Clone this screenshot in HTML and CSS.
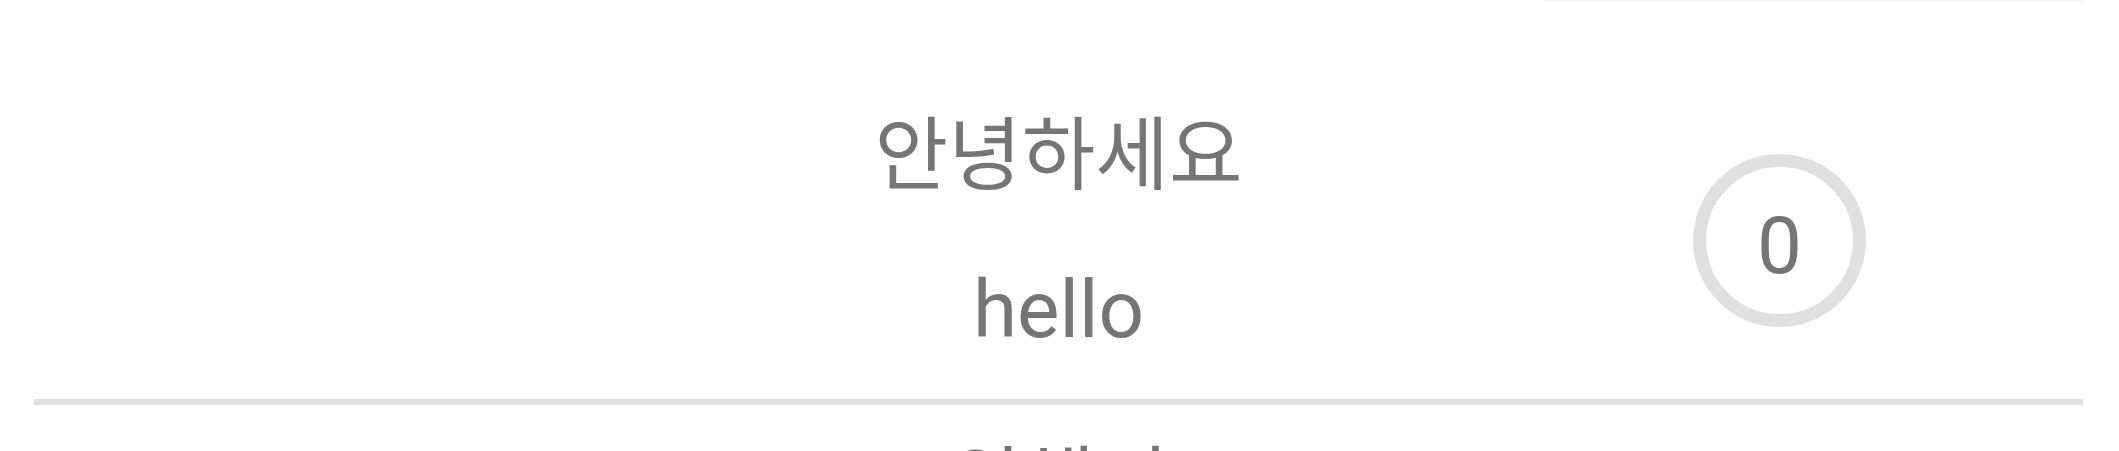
FILE: index.html
```html
<!DOCTYPE html>
<html lang="ko">
<head>
<meta charset="utf-8">
<title>List</title>
<link rel="stylesheet" href="styles.css">
</head>
<body>
<div class="top-area">
  <div class="prev-edge"></div>
</div>
<ul class="list">
  <li class="row">
    <div class="word-ko">안녕하세요</div>
    <div class="word-en">hello</div>
    <div class="count">0</div>
  </li>
  <li class="row">
    <div class="word-ko">위해서</div>
    <div class="word-en">for</div>
    <div class="count">0</div>
  </li>
</ul>
</body>
</html>
```

FILE: styles.css
```css
html, body {
  margin: 0;
  padding: 0;
  background: #ffffff;
  overflow: hidden;
}

body {
  font-family: Roboto, "Noto Sans CJK KR", sans-serif;
  color: #757575;
}

.top-area {
  height: 76px;
}

.prev-edge {
  margin-left: 1543px;
  width: 540px;
  height: 3px;
  background: linear-gradient(#f2f2f2, #ffffff);
}

.list {
  list-style: none;
  margin: 0 36px 0 34px;
  padding: 0;
}

.row {
  position: relative;
  display: flex;
  flex-direction: column;
  align-items: center;
  padding: 32px 0 49px;
  border-bottom: 6px solid #e0e0e0;
}

.word-ko {
  font-family: "Noto Sans CJK KR", sans-serif;
  font-size: 80px;
  line-height: 80px;
  height: 80px;
}

.word-en {
  margin-top: 82px;
  font-family: Roboto, sans-serif;
  font-size: 80px;
  line-height: 80px;
  height: 80px;
}

.count {
  position: absolute;
  top: 78px;
  right: 217px;
  width: 173px;
  height: 173px;
  box-sizing: border-box;
  border: 13px solid #e0e0e0;
  border-radius: 50%;
  display: flex;
  align-items: center;
  justify-content: center;
  padding-top: 10px;
  font-family: Roboto, sans-serif;
  font-size: 80px;
  line-height: 80px;
}
```
